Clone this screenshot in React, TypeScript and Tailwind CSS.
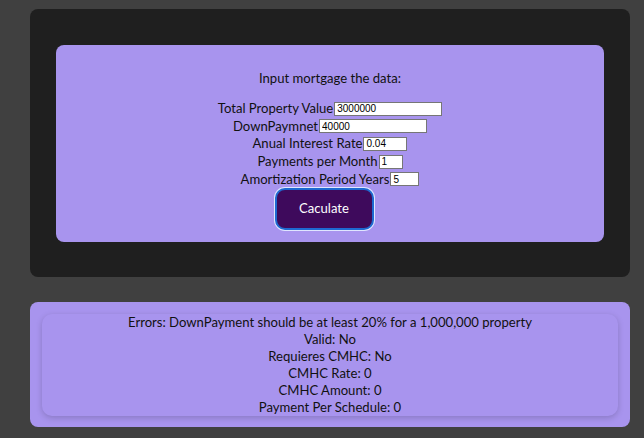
const rows = [
  { label: "Total Property Value", value: "3000000", w: "w-[108px]" },
  { label: "DownPaymnet", value: "40000", w: "w-[108px]" },
  { label: "Anual Interest Rate", value: "0.04", w: "w-[44px]" },
  { label: "Payments per Month", value: "1", w: "w-[24px]" },
  { label: "Amortization Period Years", value: "5", w: "w-[29px]" },
];

const results = [
  "Errors: DownPayment should be at least 20% for a 1,000,000 property",
  "Valid: No",
  "Requieres CMHC: No",
  "CMHC Rate: 0",
  "CMHC Amount: 0",
  "Payment Per Schedule: 0",
];

export default function App() {
  return (
    <div className="min-h-[438px] bg-[#404040] pt-[9px] font-['Lato',sans-serif] text-[13.1px] text-[#111]">
      <div className="ml-[30px] w-[600px] rounded-[8px] bg-[#1f1f1f] px-[26px] pb-[35px] pt-[36px]">
        <div className="flex flex-col items-center rounded-[8px] bg-[#a894ee] pb-[12px] pt-[25px]">
          <p className="leading-[17px]">Input mortgage the data:</p>
          <div className="mt-[13px] flex flex-col items-center">
            {rows.map((r) => (
              <div key={r.label} className="flex h-[17.6px] items-center">
                <span className="leading-[17px]">{r.label}</span>
                <input
                  readOnly
                  value={r.value}
                  className={`${r.w} ml-px h-[14px] border border-[#767676] bg-white px-[2px] font-['Liberation_Sans',sans-serif] text-[10px] text-black outline-none`}
                />
              </div>
            ))}
          </div>
          <button className="mr-[12px] h-[42px] w-[99px] rounded-[10px] border-2 border-[#1e6ad0] bg-[#3e0a5c] text-[13.1px] text-white shadow-[0_0_0_1px_#dfe6ff]">
            Caculate
          </button>
        </div>
      </div>

      <div className="ml-[30px] mt-[25px] w-[600px] rounded-[8px] bg-[#a894ee] px-[12px] pb-[11px] pt-[12px]">
        <div className="rounded-[10px] bg-[#a894ee] text-center shadow-[0_2px_6px_rgba(0,0,0,0.18)]">
          {results.map((t) => (
            <p key={t} className="leading-[17px]">
              {t}
            </p>
          ))}
        </div>
      </div>
    </div>
  );
}
